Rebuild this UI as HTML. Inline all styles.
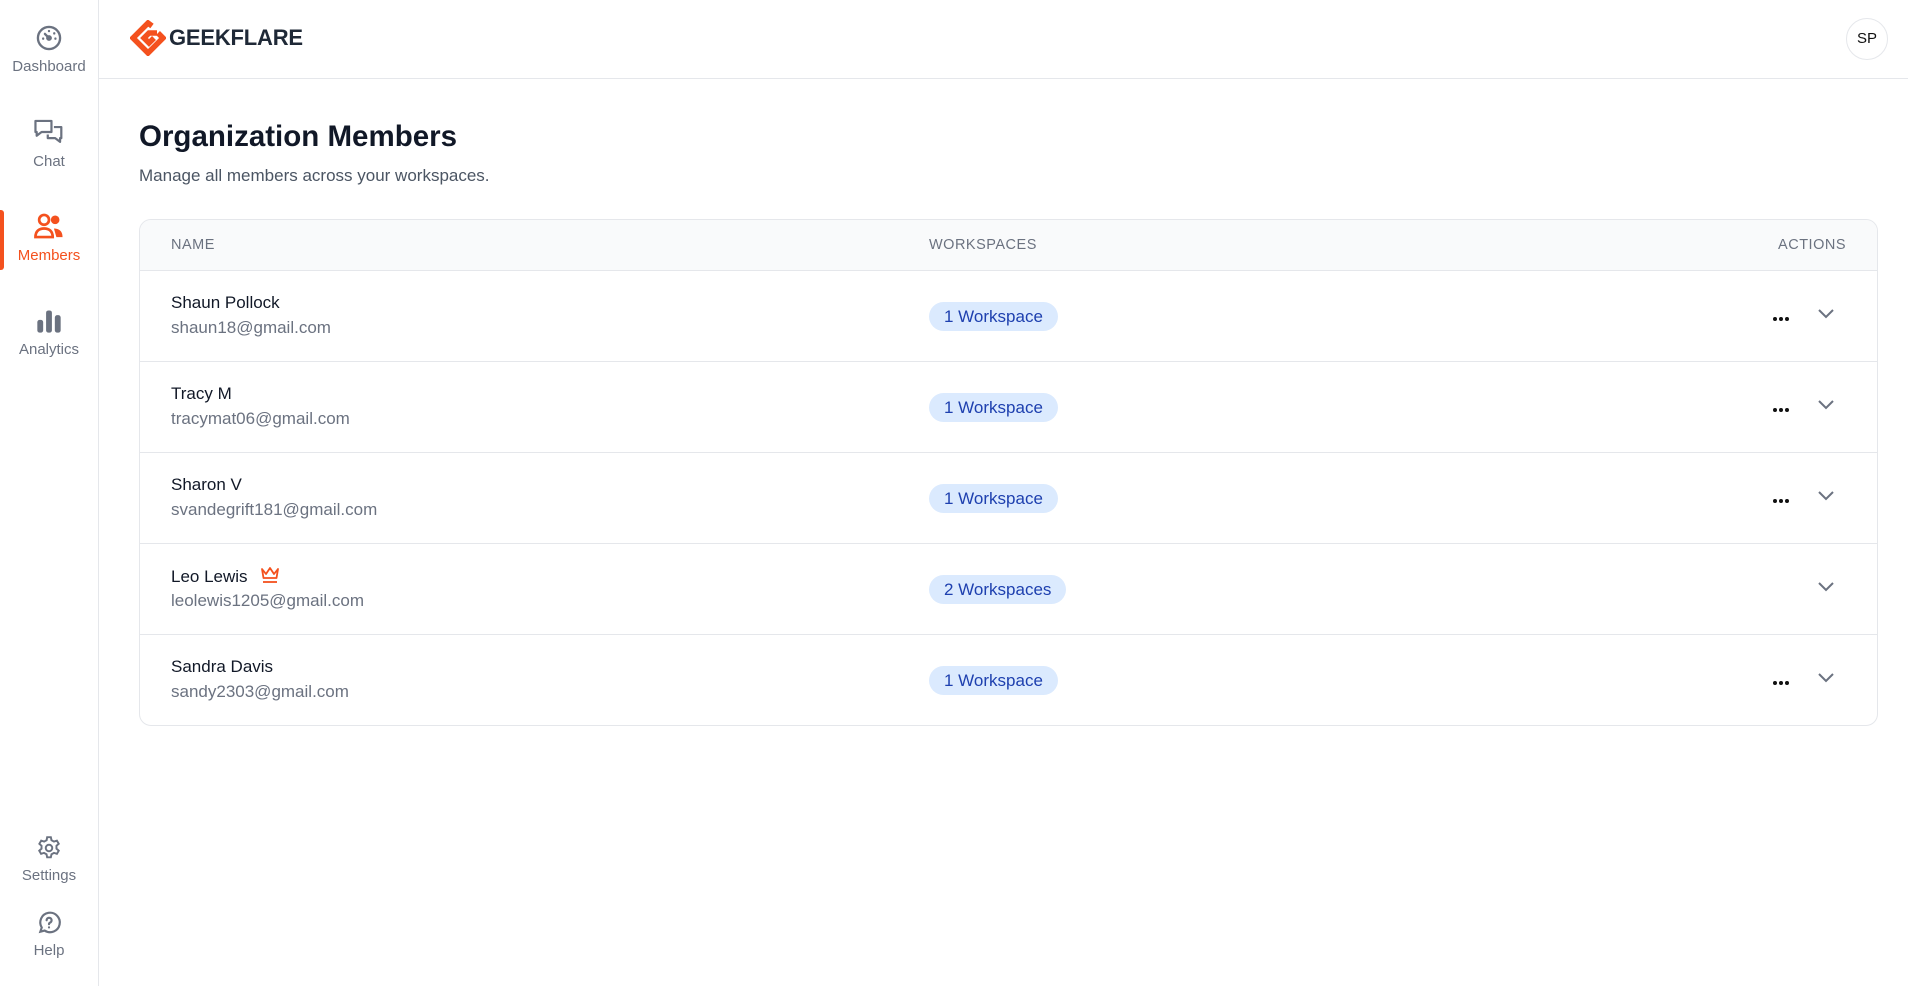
<!DOCTYPE html>
<html><head><meta charset="utf-8"><style>
*{box-sizing:border-box;margin:0;padding:0}
body{width:1908px;height:986px;background:#fff;font-family:"Liberation Sans",sans-serif;position:relative;overflow:hidden;color:#111827}
.side{position:absolute;left:0;top:0;width:99px;height:986px;border-right:1px solid #e5e7eb}
.it{position:absolute;left:0;width:98px;text-align:center;font-size:15px;color:#6b7280}
.it svg{display:block;margin:0 auto 6px}
.act{color:#f4511e}
.bar{position:absolute;left:0;top:210px;width:4px;height:60px;background:#f4511e;border-radius:0 3px 3px 0}
.top{position:absolute;left:99px;top:0;right:0;height:79px;border-bottom:1px solid #e5e7eb}
.av{position:absolute;right:20px;top:18px;width:42px;height:42px;border:1px solid #e5e7eb;border-radius:50%;text-align:center;line-height:40px;font-size:15px;color:#111}
h1{position:absolute;left:139px;top:120px;font-size:29.5px;font-weight:bold;color:#111827}
.sub{position:absolute;left:139px;top:166px;font-size:17px;color:#4b5563}
.tbl{position:absolute;left:139px;top:219px;width:1739px;height:507px;border:1px solid #e5e7eb;border-radius:12px;overflow:hidden}
.th{height:51px;background:#f9fafb;border-bottom:1px solid #e5e7eb;position:relative;font-size:14.5px;color:#6b7280;letter-spacing:.5px}
.th span{position:absolute;top:17px}
.row{height:91px;border-bottom:1px solid #e5e7eb;position:relative}
.row:last-child{border-bottom:none}
.nm{position:absolute;left:31px;top:22px;font-size:17px;color:#111827}
.em{position:absolute;left:31px;top:47px;font-size:17px;color:#6b7280}
.bd{position:absolute;left:789px;top:31px;height:29px;padding:0 15px;border-radius:15px;background:#dbeafe;color:#1e40af;font-size:17px;line-height:29px}
.dots{position:absolute;left:1633px;top:46px;width:18px;height:4px}
.dots i{position:absolute;top:0;width:4px;height:4px;border-radius:50%;background:#111}
.chev{position:absolute;left:1677px;top:37px}
</style></head><body>
<div class="side">
<div class="bar"></div>
<div class="it" style="top:24px"><svg width="28" height="28" viewBox="0 0 24 24" fill="none" stroke="#6b7280" stroke-width="2" stroke-linecap="round"><circle cx="12" cy="12" r="9.5"/><path d="M12 12l-3.5-3.5"/><circle cx="12" cy="12" r="1.5"/><path d="M12 6v.1M16.5 8v.1M17.5 12.5v.1M7 12.5v.1"/></svg>Dashboard</div>
<div class="it" style="top:117px"><svg width="32" height="30" viewBox="0 0 26 24" fill="none" stroke="#6b7280" stroke-width="1.8" stroke-linejoin="round"><path d="M2 3h13v9H7l-4 3v-3H2z"/><path d="M17 8h6v9h-1v3l-4-3h-6v-3"/></svg>Chat</div>
<div class="it act" style="top:211px"><svg width="32" height="30" viewBox="0 0 26 24" fill="none" stroke="#f4511e" stroke-width="2.2"><circle cx="9" cy="7" r="4"/><path d="M2 21c0-5 3-7 7-7s7 2 7 7z"/><circle cx="18" cy="7" r="3.5" fill="#f4511e" stroke="none"/><path d="M17 14c4 0 7 2 7 7h-5" fill="#f4511e" stroke="none"/></svg>Members</div>
<div class="it" style="top:307px"><svg width="28" height="28" viewBox="0 0 24 24" fill="#6b7280"><rect x="2" y="11" width="5" height="11" rx="2"/><rect x="9.5" y="3" width="5" height="19" rx="2"/><rect x="17" y="7" width="5" height="15" rx="2"/></svg>Analytics</div>
<div class="it" style="top:835px"><svg width="26" height="26" viewBox="0 0 24 24" fill="none" stroke="#6b7280" stroke-width="1.8"><circle cx="12" cy="12" r="3"/><path d="M10.3 2h3.4l.6 2.8 2.3 1.3 2.7-.9 1.7 2.9-2.1 1.9v2.6l2.1 1.9-1.7 2.9-2.7-.9-2.3 1.3-.6 2.8h-3.4l-.6-2.8-2.3-1.3-2.7.9-1.7-2.9 2.1-1.9v-2.6L3.1 8.1l1.7-2.9 2.7.9 2.3-1.3z"/></svg>Settings</div>
<div class="it" style="top:910px"><svg width="26" height="26" viewBox="0 0 24 24" fill="none" stroke="#6b7280" stroke-width="2" stroke-linecap="round"><path d="M4 20l1.3-3.8A9 9 0 1 1 8 19z"/><path d="M9.8 9.5a2.3 2.3 0 1 1 3.2 2.1c-.7.3-1 .8-1 1.5"/><path d="M12 16v.1"/></svg>Help</div>
</div>
<div class="top">
<div style="position:absolute;left:31px;top:20px;display:flex;align-items:center">
<svg width="36" height="36" viewBox="0 0 36 36" fill="none" stroke="#f4511e" stroke-width="5.5" stroke-linejoin="miter"><path d="M22 6L18 3 3 18l15 15 15-15-5-5"/><path d="M27 13h-8l-5 5 5 5 5-5"/></svg>
<span style="font-size:22px;font-weight:bold;color:#1f2937;margin-left:3px;letter-spacing:-.2px">GEEKFLARE</span></div>
<div class="av">SP</div>
</div>
<h1>Organization Members</h1>
<div class="sub">Manage all members across your workspaces.</div>
<div class="tbl">
<div class="th"><span style="left:31px">NAME</span><span style="left:789px">WORKSPACES</span><span style="right:31px">ACTIONS</span></div>
<div class="row"><div class="nm">Shaun Pollock</div><div class="em">shaun18@gmail.com</div><div class="bd">1 Workspace</div><div class="dots"><i style="left:0"></i><i style="left:6px"></i><i style="left:12px"></i></div><svg class="chev" width="18" height="12" viewBox="0 0 18 12" fill="none" stroke="#6b7280" stroke-width="2"><path d="M2 2l7 7 7-7"/></svg></div>
<div class="row"><div class="nm">Tracy M</div><div class="em">tracymat06@gmail.com</div><div class="bd">1 Workspace</div><div class="dots"><i style="left:0"></i><i style="left:6px"></i><i style="left:12px"></i></div><svg class="chev" width="18" height="12" viewBox="0 0 18 12" fill="none" stroke="#6b7280" stroke-width="2"><path d="M2 2l7 7 7-7"/></svg></div>
<div class="row"><div class="nm">Sharon V</div><div class="em">svandegrift181@gmail.com</div><div class="bd">1 Workspace</div><div class="dots"><i style="left:0"></i><i style="left:6px"></i><i style="left:12px"></i></div><svg class="chev" width="18" height="12" viewBox="0 0 18 12" fill="none" stroke="#6b7280" stroke-width="2"><path d="M2 2l7 7 7-7"/></svg></div>
<div class="row"><div class="nm">Leo Lewis <svg style="vertical-align:-2px;margin-left:8px" width="20" height="18" viewBox="0 0 20 18" fill="none" stroke="#f4511e" stroke-width="1.8" stroke-linejoin="round"><path d="M2 3l4 5 4-6 4 6 4-5-1.5 9h-13z"/><path d="M3 16h14"/></svg></div><div class="em">leolewis1205@gmail.com</div><div class="bd">2 Workspaces</div><svg class="chev" width="18" height="12" viewBox="0 0 18 12" fill="none" stroke="#6b7280" stroke-width="2"><path d="M2 2l7 7 7-7"/></svg></div>
<div class="row"><div class="nm">Sandra Davis</div><div class="em">sandy2303@gmail.com</div><div class="bd">1 Workspace</div><div class="dots"><i style="left:0"></i><i style="left:6px"></i><i style="left:12px"></i></div><svg class="chev" width="18" height="12" viewBox="0 0 18 12" fill="none" stroke="#6b7280" stroke-width="2"><path d="M2 2l7 7 7-7"/></svg></div>
</div>
</body></html>
